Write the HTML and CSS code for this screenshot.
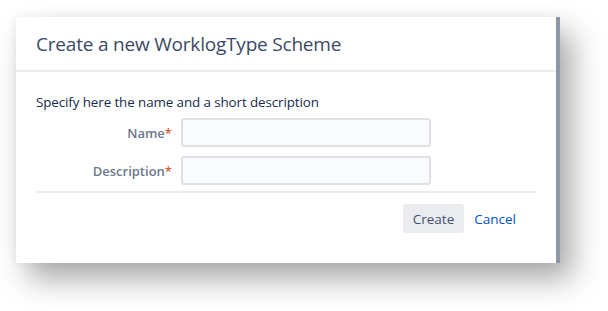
FILE: index.html
```html
<!DOCTYPE html>
<html lang="en">
<head>
  <meta charset="UTF-8" />
  <title>Create a new WorklogType Scheme</title>
  <link rel="stylesheet" href="styles.css">
</head>
<body>
  <div class="frame">
    <div class="dialog">
      <header class="dialog-header">
        <h2>Create a new WorklogType Scheme</h2>
      </header>

      <form class="dialog-body">
        <p class="intro">Specify here the name and a short description</p>

        <div class="field">
          <label for="schemeName">Name<span class="req">*</span></label>
          <input type="text" id="schemeName">
        </div>

        <div class="field">
          <label for="schemeDesc">Description<span class="req">*</span></label>
          <input type="text" id="schemeDesc">
        </div>

        <div class="actions">
          <button type="button" class="btn">Create</button>
          <a href="#" class="cancel">Cancel</a>
        </div>
      </form>
    </div>
    <div class="backdrop-edge"></div>
  </div>
</body>
</html>
```

FILE: styles.css
```css
:root {
  --text-dark: #253858;
  --label: #6b778c;
  --border: #dfe1e6;
  --link: #0052cc;
  --required: #de350b;
}

* {
  box-sizing: border-box;
  margin: 0;
  padding: 0;
}

html, body {
  height: 100%;
}

body {
  background: #ffffff;
  font-family: 'Open Sans', 'Noto Sans', sans-serif;
  color: var(--text-dark);
  padding: 17px 0 0 16px;
  overflow: hidden;
}

.frame {
  display: flex;
  width: 544px;
  height: 246px;
  box-shadow: 12px 16px 28px rgba(0, 0, 0, 0.34), -2px 0 8px rgba(0, 0, 0, 0.05);
}

.dialog {
  flex: 1;
  background: #ffffff;
  display: flex;
  flex-direction: column;
}

.backdrop-edge {
  width: 4px;
  background: #8e97aa;
}

.dialog-header {
  height: 55px;
  display: flex;
  align-items: center;
  padding-left: 20px;
  border-bottom: 2px solid #ebecf0;
}

.dialog-header h2 {
  font-size: 19px;
  font-weight: 400;
  letter-spacing: -0.2px;
  color: #3b4a66;
}

.dialog-body {
  padding: 21px 20px 0 20px;
  display: flex;
  flex-direction: column;
}

.intro {
  font-size: 13.4px;
  color: #172b4d;
  margin-bottom: 7px;
  letter-spacing: -0.1px;
}

.field {
  display: flex;
  align-items: center;
  margin-bottom: 9px;
}

.field label {
  width: 145px;
  text-align: right;
  padding-right: 9px;
  font-size: 13px;
  font-weight: 600;
  color: var(--label);
}

.req {
  color: var(--required);
  font-weight: 400;
}

.field input {
  width: 250px;
  height: 29px;
  background: #fafbfc;
  border: 2px solid var(--border);
  border-radius: 3px;
}

.actions {
  border-top: 2px solid #ebecf0;
  margin-top: -3px;
  padding-top: 11px;
  padding-right: 20px;
  display: flex;
  justify-content: flex-end;
  align-items: center;
  gap: 10px;
}

.btn {
  font-family: inherit;
  font-size: 13.5px;
  color: #42526e;
  background: #ebecf0;
  border: none;
  border-radius: 3px;
  height: 29px;
  padding: 0 10px;
}

.cancel {
  font-size: 13.5px;
  color: var(--link);
  text-decoration: none;
}
```
